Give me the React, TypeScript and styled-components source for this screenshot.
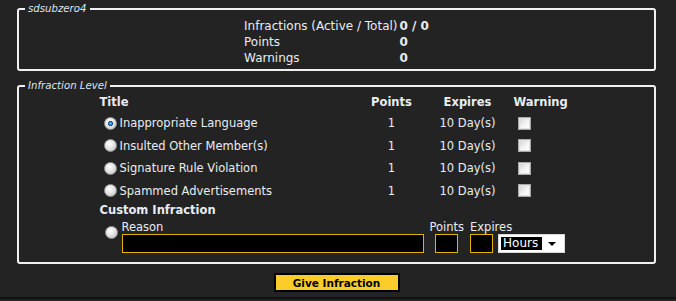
import React, { useState } from 'react'
import styled, { createGlobalStyle } from 'styled-components'

const COLORS = {
  BG: '#232323',
  TEXT: '#e9edf3',
  BORDER: '#f0f0f0',
  LEGEND: '#dde4f2',
  GOLD: '#dfb20d',
  BUTTON: '#fccd2a',
}

const FONT = `'DejaVu Sans', Verdana, sans-serif`

const GlobalStyle = createGlobalStyle`
  html, body {
    margin: 0;
    background: ${COLORS.BG};
  }

  body {
    font-family: ${FONT};
    font-size: 11.5px;
    color: ${COLORS.TEXT};
  }
`

const Page = styled.div`
  width: 676px;
  height: 301px;
  box-sizing: border-box;
  padding: 3px 20px 0 17px;
  overflow: hidden;
`

const Fieldset = styled.fieldset<{ spaced?: boolean }>`
  margin: ${({ spaced }) => (spaced ? '9px 0 0' : '0')};
  padding: 0 6px 3px;
  border: 2px solid ${COLORS.BORDER};
  border-radius: 3px;
  min-width: 0;
`

const Legend = styled.legend`
  padding: 0 3px;
  font-family: ${FONT};
  font-size: 10.2px;
  line-height: 12px;
  height: 12px;
  font-style: italic;
  color: ${COLORS.LEGEND};
`

const StatsGrid = styled.div`
  display: grid;
  grid-template-columns: auto auto;
  justify-content: center;
  column-gap: 2px;
  grid-auto-rows: 16px;
  align-items: center;
  padding-top: 3px;
  font-size: 12px;
`

const StatValue = styled.span`
  font-weight: bold;
`

const LevelGrid = styled.div`
  display: grid;
  grid-template-columns: 262px 60px 92px 60px;
  grid-template-rows: 20px;
  justify-content: center;
  grid-auto-rows: 22.5px;
  align-items: center;
`

const HeadCell = styled.div<{ align?: string }>`
  font-weight: bold;
  text-align: ${({ align }) => align || 'center'};
`

const Cell = styled.div<{ align?: string }>`
  text-align: ${({ align }) => align || 'center'};
`

const TitleCell = styled.label`
  display: flex;
  align-items: center;
`

const Radio = styled.input.attrs({ type: 'radio' })`
  appearance: none;
  width: 13px;
  height: 13px;
  margin: 0 3px 0 4px;
  border-radius: 50%;
  border: 1px solid #9a9a9a;
  box-sizing: border-box;
  background: radial-gradient(circle at 40% 35%, #ffffff 0%, #e4e4e4 45%, #b9b9b9 100%);
  flex-shrink: 0;

  &:checked {
    background:
      radial-gradient(circle at 50% 50%, #7cc4f5 0%, #1f74b8 22%, #0d4a85 30%, transparent 34%),
      radial-gradient(circle at 40% 35%, #ffffff 0%, #e4e4e4 45%, #b9b9b9 100%);
  }
`

const Checkbox = styled.input.attrs({ type: 'checkbox' })`
  appearance: none;
  width: 13px;
  height: 13px;
  margin: 0 0 0 4px;
  box-sizing: border-box;
  border: 1px solid #a8a8a8;
  background: linear-gradient(135deg, #cfcfcf 0%, #f4f4f4 55%, #ffffff 100%);
  box-shadow: inset 0 0 0 1px #e2e2e2;
  display: block;
`

const CustomHeading = styled.div`
  width: 474px;
  margin: 0 auto;
  font-weight: bold;
  line-height: 16px;
`

const CustomRow = styled.div`
  display: flex;
  align-items: flex-end;
  width: 474px;
  margin: 2px auto 0;
  padding-bottom: 6px;
`

const CustomRadio = styled(Radio)`
  margin: 0 4px 14px 5px;
`

const FieldGroup = styled.div<{ center?: boolean; gap?: number }>`
  display: flex;
  flex-direction: column;
  align-items: ${({ center }) => (center ? 'center' : 'flex-start')};
  margin-left: ${({ gap }) => gap || 0}px;
`

const FieldLabel = styled.span`
  line-height: 14px;
`

const TextBox = styled.input<{ w: number }>`
  width: ${({ w }) => w}px;
  height: 19px;
  box-sizing: border-box;
  margin: 0;
  padding: 0 2px;
  background: #000;
  border: 1px solid ${COLORS.GOLD};
  color: #fff;
  font: inherit;
  outline: none;
`

const ExpiresRow = styled.div`
  display: flex;
  align-items: center;
  gap: 5px;
`

const SelectBox = styled.div`
  width: 67px;
  height: 19px;
  box-sizing: border-box;
  border: 1px solid #d8d8d8;
  background: #fff;
  display: flex;
  align-items: center;
  padding: 2px;
`

const SelectValue = styled.span`
  flex: 1;
  height: 100%;
  background: #000;
  color: #fff;
  font-size: 12px;
  line-height: 13px;
  padding-left: 2px;
`

const SelectArrow = styled.span`
  width: 20px;
  display: flex;
  justify-content: center;
  align-items: center;
`

const ButtonRow = styled.div`
  display: flex;
  justify-content: center;
  margin-top: 9px;
`

const SubmitButton = styled.button`
  width: 126px;
  height: 19px;
  box-sizing: border-box;
  border: 2px solid #000;
  background: ${COLORS.BUTTON};
  color: #000;
  font-family: ${FONT};
  font-size: 10.5px;
  font-weight: bold;
  padding: 0;
  cursor: pointer;
`

const Footer = styled.div`
  margin: 5px -20px 0 -17px;
  border-top: 2px solid #111;
`

const levels = [
  { title: 'Inappropriate Language', points: 1, expires: '10 Day(s)' },
  { title: 'Insulted Other Member(s)', points: 1, expires: '10 Day(s)' },
  { title: 'Signature Rule Violation', points: 1, expires: '10 Day(s)' },
  { title: 'Spammed Advertisements', points: 1, expires: '10 Day(s)' },
]

const App = () => {
  const [selected, setSelected] = useState('0')

  return (
    <>
      <GlobalStyle />
      <Page>
        <Fieldset>
          <Legend>sdsubzero4</Legend>
          <StatsGrid>
            <span>Infractions (Active / Total)</span>
            <StatValue>0 / 0</StatValue>
            <span>Points</span>
            <StatValue>0</StatValue>
            <span>Warnings</span>
            <StatValue>0</StatValue>
          </StatsGrid>
        </Fieldset>

        <Fieldset spaced>
          <Legend>Infraction Level</Legend>
          <LevelGrid>
            <HeadCell align="left">Title</HeadCell>
            <HeadCell>Points</HeadCell>
            <HeadCell>Expires</HeadCell>
            <HeadCell align="left">Warning</HeadCell>
            {levels.map((level, index) => (
              <React.Fragment key={level.title}>
                <TitleCell>
                  <Radio
                    name="level"
                    checked={selected === String(index)}
                    onChange={() => setSelected(String(index))}
                  />
                  {level.title}
                </TitleCell>
                <Cell>{level.points}</Cell>
                <Cell>{level.expires}</Cell>
                <Cell align="left">
                  <Checkbox />
                </Cell>
              </React.Fragment>
            ))}
          </LevelGrid>
          <CustomHeading>Custom Infraction</CustomHeading>
          <CustomRow>
            <CustomRadio
              name="level"
              checked={selected === 'custom'}
              onChange={() => setSelected('custom')}
            />
            <FieldGroup>
              <FieldLabel>Reason</FieldLabel>
              <TextBox w={302} />
            </FieldGroup>
            <FieldGroup center gap={6}>
              <FieldLabel>Points</FieldLabel>
              <TextBox w={23} />
            </FieldGroup>
            <FieldGroup gap={6}>
              <FieldLabel>Expires</FieldLabel>
              <ExpiresRow>
                <TextBox w={23} />
                <SelectBox>
                  <SelectValue>Hours</SelectValue>
                  <SelectArrow>
                    <svg width="8" height="4" viewBox="0 0 8 4">
                      <path d="M0 0 L8 0 L4 4 Z" fill="#000" />
                    </svg>
                  </SelectArrow>
                </SelectBox>
              </ExpiresRow>
            </FieldGroup>
          </CustomRow>
        </Fieldset>

        <ButtonRow>
          <SubmitButton type="button">Give Infraction</SubmitButton>
        </ButtonRow>
        <Footer />
      </Page>
    </>
  )
}

export default App
